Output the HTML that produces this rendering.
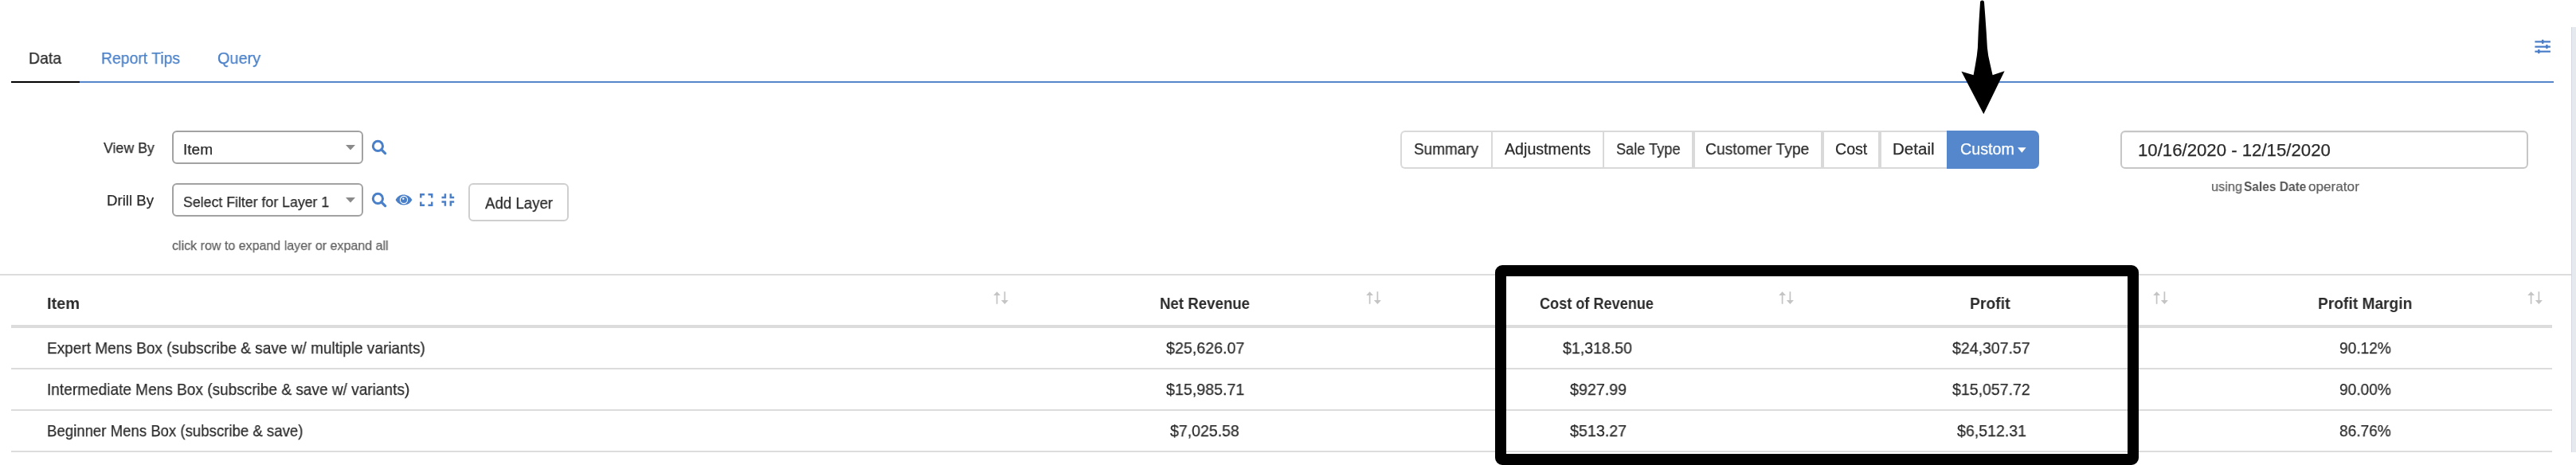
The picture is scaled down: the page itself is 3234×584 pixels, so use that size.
<!DOCTYPE html>
<html><head><meta charset="utf-8"><title>Report</title>
<style>
html,body{margin:0;padding:0;background:#fff;}
body{width:3234px;height:584px;position:relative;overflow:hidden;font-family:"Liberation Sans",sans-serif;}
.abs{position:absolute;}
.box{box-sizing:border-box;}
.t{position:absolute;white-space:nowrap;transform-origin:0 0;will-change:transform;-webkit-text-stroke:0.25px currentColor;}
</style></head><body>

<!-- tabs underline -->
<div class="abs" style="left:14px;top:102px;width:86px;height:2px;background:#000"></div>
<div class="abs" style="left:100px;top:102px;width:3106px;height:2px;background:#5585cb"></div>
<!-- sliders icon -->
<svg class="abs" style="left:3180px;top:46px" width="26" height="24" viewBox="0 0 26 24">
 <g fill="#4a7ec8">
  <rect x="2.4" y="5.3" width="19.5" height="2.2"/><rect x="10.9" y="3.8" width="2.6" height="5.2" rx="1"/>
  <rect x="2.4" y="11.6" width="19.5" height="2.2"/><rect x="16.1" y="10.1" width="2.6" height="5.2" rx="1"/>
  <rect x="2.4" y="17.6" width="19.5" height="2.2"/><rect x="6.0" y="16.1" width="2.6" height="5.2" rx="1"/>
 </g>
</svg>
<!-- scrollbar -->
<div class="abs" style="left:3228px;top:34px;width:6px;height:534px;background:#e6eaee;border-left:1.5px solid #d3d9df;box-sizing:border-box"></div>
<!-- selects -->
<div class="abs box" style="left:216px;top:164px;width:240px;height:42px;border:2px solid #a2a2a2;border-radius:6px"></div>
<div class="abs box" style="left:216px;top:230px;width:240px;height:42px;border:2px solid #a2a2a2;border-radius:6px"></div>
<svg class="abs" style="left:434px;top:181.5px" width="12" height="7"><path d="M0 0H12L6 6.5Z" fill="#8a8a8a"/></svg>
<svg class="abs" style="left:434px;top:247.5px" width="12" height="7"><path d="M0 0H12L6 6.5Z" fill="#8a8a8a"/></svg>
<!-- search icons -->
<svg class="abs" style="left:466px;top:175px" width="21" height="21" viewBox="0 0 21 21"><circle cx="8.4" cy="8.4" r="6.1" fill="none" stroke="#4a80c9" stroke-width="3"/><path d="M12.8 12.8L17.6 17.6" stroke="#4a80c9" stroke-width="3.2" stroke-linecap="round"/></svg>
<svg class="abs" style="left:466px;top:241px" width="21" height="21" viewBox="0 0 21 21"><circle cx="8.4" cy="8.4" r="6.1" fill="none" stroke="#4a80c9" stroke-width="3"/><path d="M12.8 12.8L17.6 17.6" stroke="#4a80c9" stroke-width="3.2" stroke-linecap="round"/></svg>
<!-- eye -->
<svg class="abs" style="left:495.5px;top:244px" width="22" height="14" viewBox="0 0 22 14">
 <path d="M0.6 7 C3.5 2 7 0.6 11 0.6 C15 0.6 18.5 2 21.4 7 C18.5 12 15 13.4 11 13.4 C7 13.4 3.5 12 0.6 7Z" fill="#4a80c9"/>
 <circle cx="11" cy="7" r="4.6" fill="none" stroke="#fff" stroke-width="1.1"/>
 <circle cx="10.3" cy="5.6" r="1.2" fill="#fff"/>
</svg>
<!-- expand -->
<svg class="abs" style="left:527px;top:243px" width="17" height="16" viewBox="0 0 17 16" fill="none" stroke="#4a80c9" stroke-width="2.5">
 <path d="M6 1.3H1.3V5.5"/><path d="M10.5 1.3H15.2V5.5"/><path d="M1.3 10.5V14.7H6"/><path d="M15.2 10.5V14.7H10.5"/>
</svg>
<!-- compress -->
<svg class="abs" style="left:553.5px;top:243px" width="17" height="16" viewBox="0 0 17 16" fill="none" stroke="#4a80c9" stroke-width="2.5">
 <path d="M0.5 5H4.9V0.3"/><path d="M16.2 5H11.8V0.3"/><path d="M0.5 10.5H4.9V15.7"/><path d="M16.2 10.5H11.8V15.7"/>
</svg>
<!-- add layer btn -->
<div class="abs box" style="left:588px;top:230px;width:126px;height:48px;border:2px solid #cfcfcf;border-radius:6px"></div>
<!-- button group -->
<div class="abs box" style="left:1758px;top:164px;width:687px;height:48px;border:2px solid #d9d9d9;border-right:none;border-radius:6px 0 0 6px"></div>
<div class="abs" style="left:1872px;top:164px;width:2px;height:48px;background:#d9d9d9"></div>
<div class="abs" style="left:2012px;top:164px;width:2px;height:48px;background:#d9d9d9"></div>
<div class="abs" style="left:2124px;top:164px;width:4px;height:48px;background:#d9d9d9"></div>
<div class="abs" style="left:2286px;top:164px;width:4px;height:48px;background:#d9d9d9"></div>
<div class="abs" style="left:2358px;top:164px;width:4px;height:48px;background:#d9d9d9"></div>
<div class="abs" style="left:2444px;top:164px;width:116px;height:48px;background:#5487cc;border-radius:0 7px 7px 0"></div>
<svg class="abs" style="left:2532.5px;top:184.5px" width="11" height="8"><path d="M0 0.3H10.6L5.3 6.7Z" fill="#fff"/></svg>
<!-- date input -->
<div class="abs box" style="left:2662px;top:164px;width:512px;height:48px;border:2px solid #c6c6c6;border-radius:6px;box-shadow:inset 0 1px 1px rgba(0,0,0,.06)"></div>
<!-- table -->
<div class="abs" style="left:0;top:344px;width:3228px;height:2px;background:#dcdcdc"></div>
<div class="abs" style="left:14px;top:408px;width:3190px;height:4px;background:#dcdcdc"></div>
<div class="abs" style="left:14px;top:462px;width:3190px;height:2px;background:#dcdcdc"></div>
<div class="abs" style="left:14px;top:514px;width:3190px;height:2px;background:#dcdcdc"></div>
<div class="abs" style="left:14px;top:566px;width:3190px;height:2px;background:#dcdcdc"></div>

<svg class="abs" style="left:1247px;top:365px" width="20" height="18" viewBox="0 0 20 18" fill="#c4c4c4">
 <path d="M4.6 1.2L9.0 5.9H5.45V16.8H3.75V5.9H0.2Z"/><path d="M13.55 1.2H15.25V11.9H18.9L14.4 17.1L9.9 11.9H13.55Z"/></svg>
<svg class="abs" style="left:1715px;top:365px" width="20" height="18" viewBox="0 0 20 18" fill="#c4c4c4">
 <path d="M4.6 1.2L9.0 5.9H5.45V16.8H3.75V5.9H0.2Z"/><path d="M13.55 1.2H15.25V11.9H18.9L14.4 17.1L9.9 11.9H13.55Z"/></svg>
<svg class="abs" style="left:2233px;top:365px" width="20" height="18" viewBox="0 0 20 18" fill="#c4c4c4">
 <path d="M4.6 1.2L9.0 5.9H5.45V16.8H3.75V5.9H0.2Z"/><path d="M13.55 1.2H15.25V11.9H18.9L14.4 17.1L9.9 11.9H13.55Z"/></svg>
<svg class="abs" style="left:2703px;top:365px" width="20" height="18" viewBox="0 0 20 18" fill="#c4c4c4">
 <path d="M4.6 1.2L9.0 5.9H5.45V16.8H3.75V5.9H0.2Z"/><path d="M13.55 1.2H15.25V11.9H18.9L14.4 17.1L9.9 11.9H13.55Z"/></svg>
<svg class="abs" style="left:3173px;top:365px" width="20" height="18" viewBox="0 0 20 18" fill="#c4c4c4">
 <path d="M4.6 1.2L9.0 5.9H5.45V16.8H3.75V5.9H0.2Z"/><path d="M13.55 1.2H15.25V11.9H18.9L14.4 17.1L9.9 11.9H13.55Z"/></svg>
<div class="t" id="tab1" style="left:35.96px;top:62.66px;font-size:20.4px;line-height:20.4px;font-weight:normal;color:#2b2b2b;transform:scaleX(0.9548)">Data</div>
<div class="t" id="tab2" style="left:126.81px;top:62.56px;font-size:20.4px;line-height:20.4px;font-weight:normal;color:#4a80c9;transform:scaleX(0.9498)">Report Tips</div>
<div class="t" id="tab3" style="left:273.23px;top:62.66px;font-size:20.4px;line-height:20.4px;font-weight:normal;color:#4a80c9;transform:scaleX(0.9764)">Query</div>
<div class="t" id="lv" style="left:129.52px;top:177.08px;font-size:18.5px;line-height:18.5px;font-weight:normal;color:#2b2b2b;transform:scaleX(0.9593)">View By</div>
<div class="t" id="ld" style="left:134.28px;top:243.08px;font-size:18.5px;line-height:18.5px;font-weight:normal;color:#2b2b2b;transform:scaleX(1.0080)">Drill By</div>
<div class="t" id="sv" style="left:230.08px;top:179.10px;font-size:18.7px;line-height:18.7px;font-weight:normal;color:#2b2b2b;transform:scaleX(1.0201)">Item</div>
<div class="t" id="sd" style="left:229.97px;top:245.10px;font-size:18.7px;line-height:18.7px;font-weight:normal;color:#2b2b2b;transform:scaleX(0.9486)">Select Filter for Layer 1</div>
<div class="t" id="add" style="left:608.89px;top:244.77px;font-size:20.5px;line-height:20.5px;font-weight:normal;color:#2b2b2b;transform:scaleX(0.9109)">Add Layer</div>
<div class="t" id="help" style="left:215.79px;top:300.28px;font-size:17.2px;line-height:17.2px;font-weight:normal;color:#636363;transform:scaleX(0.9321)">click row to expand layer or expand all</div>
<div class="t" id="b0" style="left:1775.19px;top:178.04px;font-size:19.6px;line-height:19.6px;font-weight:normal;color:#2b2b2b;transform:scaleX(0.9672)">Summary</div>
<div class="t" id="b1" style="left:1888.88px;top:178.04px;font-size:19.6px;line-height:19.6px;font-weight:normal;color:#2b2b2b;transform:scaleX(1.0020)">Adjustments</div>
<div class="t" id="b2" style="left:2028.63px;top:178.04px;font-size:19.6px;line-height:19.6px;font-weight:normal;color:#2b2b2b;transform:scaleX(0.9274)">Sale Type</div>
<div class="t" id="b3" style="left:2141.24px;top:178.04px;font-size:19.6px;line-height:19.6px;font-weight:normal;color:#2b2b2b;transform:scaleX(0.9837)">Customer Type</div>
<div class="t" id="b4" style="left:2303.85px;top:178.04px;font-size:19.6px;line-height:19.6px;font-weight:normal;color:#2b2b2b;transform:scaleX(0.9910)">Cost</div>
<div class="t" id="b5" style="left:2376.41px;top:178.04px;font-size:19.6px;line-height:19.6px;font-weight:normal;color:#2b2b2b;transform:scaleX(1.0491)">Detail</div>
<div class="t" id="bc" style="left:2460.89px;top:178.04px;font-size:19.6px;line-height:19.6px;font-weight:normal;color:#ffffff;transform:scaleX(1.0044)">Custom</div>
<div class="t" id="date" style="left:2683.95px;top:178.33px;font-size:22.2px;line-height:22.2px;font-weight:normal;color:#2b2b2b;transform:scaleX(0.9986)">10/16/2020 - 12/15/2020</div>
<div class="t" id="us1" style="left:2775.84px;top:226.35px;font-size:17.0px;line-height:17.0px;font-weight:normal;color:#636363;transform:scaleX(0.9593)">using</div>
<div class="t" id="us2" style="left:2816.79px;top:226.35px;font-size:17.0px;line-height:17.0px;font-weight:bold;color:#555555;transform:scaleX(0.9105);-webkit-text-stroke:0">Sales Date</div>
<div class="t" id="us3" style="left:2898.13px;top:226.35px;font-size:17.0px;line-height:17.0px;font-weight:normal;color:#636363;transform:scaleX(1.0086)">operator</div>
<div class="t" id="h0" style="left:59.16px;top:371.49px;font-size:20.6px;line-height:20.6px;font-weight:bold;color:#2b2b2b;transform:scaleX(0.9700);-webkit-text-stroke:0">Item</div>
<div class="t" id="h1" style="left:1456.01px;top:371.49px;font-size:20.6px;line-height:20.6px;font-weight:bold;color:#2b2b2b;transform:scaleX(0.9058);-webkit-text-stroke:0">Net Revenue</div>
<div class="t" id="h2" style="left:1933.15px;top:371.49px;font-size:20.6px;line-height:20.6px;font-weight:bold;color:#2b2b2b;transform:scaleX(0.8795);-webkit-text-stroke:0">Cost of Revenue</div>
<div class="t" id="h3" style="left:2472.82px;top:371.49px;font-size:20.6px;line-height:20.6px;font-weight:bold;color:#2b2b2b;transform:scaleX(0.9378);-webkit-text-stroke:0">Profit</div>
<div class="t" id="h4" style="left:2909.83px;top:371.49px;font-size:20.6px;line-height:20.6px;font-weight:bold;color:#2b2b2b;transform:scaleX(0.9315);-webkit-text-stroke:0">Profit Margin</div>
<div class="t" id="r0_0" style="left:59.17px;top:426.63px;font-size:20.2px;line-height:20.2px;font-weight:normal;color:#2b2b2b;transform:scaleX(0.9426)">Expert Mens Box (subscribe &amp; save w/ multiple variants)</div>
<div class="t" id="r0_1" style="left:1463.52px;top:426.63px;font-size:20.2px;line-height:20.2px;font-weight:normal;color:#2b2b2b;transform:scaleX(0.9741)">$25,626.07</div>
<div class="t" id="r0_2" style="left:1962.32px;top:426.63px;font-size:20.2px;line-height:20.2px;font-weight:normal;color:#2b2b2b;transform:scaleX(0.9693)">$1,318.50</div>
<div class="t" id="r0_3" style="left:2450.94px;top:426.63px;font-size:20.2px;line-height:20.2px;font-weight:normal;color:#2b2b2b;transform:scaleX(0.9666)">$24,307.57</div>
<div class="t" id="r0_4" style="left:2936.69px;top:426.63px;font-size:20.2px;line-height:20.2px;font-weight:normal;color:#2b2b2b;transform:scaleX(0.9469)">90.12%</div>
<div class="t" id="r1_0" style="left:59.05px;top:478.63px;font-size:20.2px;line-height:20.2px;font-weight:normal;color:#2b2b2b;transform:scaleX(0.9436)">Intermediate Mens Box (subscribe &amp; save w/ variants)</div>
<div class="t" id="r1_1" style="left:1463.52px;top:478.63px;font-size:20.2px;line-height:20.2px;font-weight:normal;color:#2b2b2b;transform:scaleX(0.9735)">$15,985.71</div>
<div class="t" id="r1_2" style="left:1970.52px;top:478.63px;font-size:20.2px;line-height:20.2px;font-weight:normal;color:#2b2b2b;transform:scaleX(0.9743)">$927.99</div>
<div class="t" id="r1_3" style="left:2450.94px;top:478.63px;font-size:20.2px;line-height:20.2px;font-weight:normal;color:#2b2b2b;transform:scaleX(0.9669)">$15,057.72</div>
<div class="t" id="r1_4" style="left:2936.69px;top:478.63px;font-size:20.2px;line-height:20.2px;font-weight:normal;color:#2b2b2b;transform:scaleX(0.9469)">90.00%</div>
<div class="t" id="r2_0" style="left:58.59px;top:530.63px;font-size:20.2px;line-height:20.2px;font-weight:normal;color:#2b2b2b;transform:scaleX(0.9210)">Beginner Mens Box (subscribe &amp; save)</div>
<div class="t" id="r2_1" style="left:1468.92px;top:530.63px;font-size:20.2px;line-height:20.2px;font-weight:normal;color:#2b2b2b;transform:scaleX(0.9672)">$7,025.58</div>
<div class="t" id="r2_2" style="left:1970.52px;top:530.63px;font-size:20.2px;line-height:20.2px;font-weight:normal;color:#2b2b2b;transform:scaleX(0.9744)">$513.27</div>
<div class="t" id="r2_3" style="left:2456.52px;top:530.63px;font-size:20.2px;line-height:20.2px;font-weight:normal;color:#2b2b2b;transform:scaleX(0.9690)">$6,512.31</div>
<div class="t" id="r2_4" style="left:2937.06px;top:530.63px;font-size:20.2px;line-height:20.2px;font-weight:normal;color:#2b2b2b;transform:scaleX(0.9459)">86.76%</div>
<svg class="abs" style="left:2455px;top:0" width="70" height="150" viewBox="0 0 70 150">
 <path d="M31.00 3.00 A2.5 2.5 0 0 1 36.00 3.00 L37.30 20.00 L38.70 40.00 L39.90 60.00 L41.20 70.00 L43.70 81.50 L46.60 94.20 L61.60 89.20 L35.30 143.30 L7.40 89.70 L22.60 94.20 L24.90 81.50 L26.80 70.00 L27.90 60.00 L28.70 40.00 L29.90 20.00 L31.00 3.00 Z" fill="#000"/>
</svg>
<div class="abs box" style="left:1877px;top:332.5px;width:808px;height:251px;border:14px solid #000;border-radius:9px"></div>

</body></html>
